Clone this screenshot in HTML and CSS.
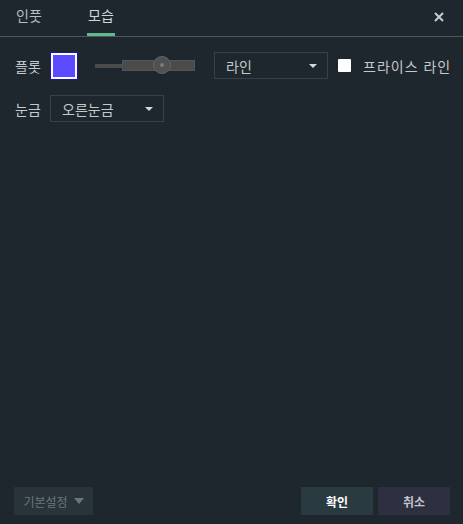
FILE: index.html
```html
<!DOCTYPE html>
<html lang="ko">
<head>
<meta charset="utf-8">
<link rel="stylesheet" href="styles.css">
</head>
<body>
<div class="dialog">
  <div class="tabs">
    <div class="tab">인풋</div>
    <div class="tab active">모습</div>
    <div class="close">
      <svg width="10" height="10" viewBox="0 0 10 10"><path d="M1 1L9 9M9 1L1 9" stroke="#c9ccce" stroke-width="2"/></svg>
    </div>
  </div>
  <div class="content">
    <div class="row row1">
      <span class="label">플롯</span>
      <span class="swatch"></span>
      <div class="slider">
        <span class="track-thin"></span>
        <span class="track-thick"></span>
        <span class="knob"><span class="dot"></span></span>
      </div>
      <div class="select sel-line"><span>라인</span><span class="arrow"></span></div>
      <span class="checkbox"></span>
      <span class="cb-label">프라이스 라인</span>
    </div>
    <div class="row row2">
      <span class="label">눈금</span>
      <div class="select sel-scale"><span>오른눈금</span><span class="arrow"></span></div>
    </div>
  </div>
  <div class="footer">
    <div class="btn defaults">기본설정 <span class="arrow dim"></span></div>
    <div class="spacer"></div>
    <div class="btn ok">확인</div>
    <div class="btn cancel">취소</div>
  </div>
</div>
</body>
</html>
```
FILE: styles.css
```css
html, body {
  margin: 0;
  padding: 0;
  background: #1e272e;
}
body {
  font-family: "Noto Sans CJK KR", "Noto Sans", sans-serif;
  font-size: 14px;
  color: #c6c9cb;
}
.dialog {
  width: 463px;
  height: 524px;
  display: flex;
  flex-direction: column;
}
.tabs {
  height: 36px;
  border-bottom: 1px solid #4f5659;
  display: flex;
  align-items: stretch;
  padding-left: 15px;
  padding-right: 19px;
}
.tab {
  display: flex;
  align-items: center;
  justify-content: center;
  width: 28px;
  padding-bottom: 3px;
  line-height: 16px;
  margin-right: 44px;
  color: #b9bdc0;
  box-sizing: border-box;
  border-bottom: 3px solid transparent;
  height: 36px;
}
.tab.active {
  border-bottom-color: #5fb88f;
  color: #d2d5d7;
}
.close {
  margin-left: auto;
  display: flex;
  align-items: center;
  padding-bottom: 2px;
}
.content {
  flex: 1;
  padding-left: 15px;
  padding-top: 15px;
}
.row {
  display: flex;
  align-items: center;
}
.row1 { height: 27px; }
.row2 { height: 27px; margin-top: 16px; }
.label {
  width: 26px;
  line-height: 16px;
  color: #c6c9cb;
  white-space: nowrap;
}
.swatch {
  margin-left: 10px;
  width: 22px;
  height: 22px;
  background: #5b4bff;
  border: 2px solid #ffffff;
  outline: 1px solid #1e14b4;
  box-sizing: content-box;
}
.slider {
  margin-left: 18px;
  width: 100px;
  height: 20px;
  display: flex;
  align-items: center;
  position: relative;
}
.track-thin {
  width: 27px;
  height: 4px;
  background: #4b4b4b;
}
.track-thick {
  width: 73px;
  height: 11px;
  background: #4b4b4b;
  box-sizing: border-box;
  border: 1px solid #555;
}
.knob {
  position: absolute;
  left: 58px;
  top: 0px;
  width: 18px;
  height: 18px;
  box-sizing: border-box;
  border-radius: 50%;
  background: #515151;
  border: 1px solid #646464;
  display: flex;
  align-items: center;
  justify-content: center;
}
.dot {
  width: 4px;
  height: 4px;
  border-radius: 50%;
  background: #7a7a7a;
}
.select {
  height: 27px;
  box-sizing: border-box;
  border: 1px solid #36424a;
  display: flex;
  align-items: center;
  justify-content: space-between;
  padding: 0 10px 0 11px;
  color: #c6c9cb;
  line-height: 16px;
}
.sel-line {
  margin-left: 19px;
  width: 114px;
}
.sel-scale {
  margin-left: 9px;
  width: 114px;
  padding-left: 11px;
}
.arrow {
  width: 0;
  height: 0;
  border-left: 4px solid transparent;
  border-right: 4px solid transparent;
  border-top: 4px solid #d6d8da;
}
.checkbox {
  margin-left: 10px;
  width: 13px;
  height: 13px;
  background: #ffffff;
  border-radius: 1px;
}
.cb-label {
  margin-left: 12px;
  color: #c6c9cb;
  line-height: 16px;
  letter-spacing: 1px;
}
.footer {
  display: flex;
  align-items: center;
  padding: 0 13px 9px 14px;
  height: 28px;
}
.spacer { flex: 1; }
.btn {
  height: 28px;
  display: flex;
  align-items: center;
  justify-content: center;
  box-sizing: border-box;
  font-size: 12px;
}
.defaults {
  width: 79px;
  background: #28333a;
  color: #6b757b;
  gap: 6px;
}
.arrow.dim {
  border-left-width: 5px;
  border-right-width: 5px;
  border-top: 6px solid #6b757b;
}
.ok {
  width: 72px;
  background: #2a3a41;
  color: #ffffff;
  font-weight: bold;
}
.cancel {
  width: 72px;
  margin-left: 5px;
  background: #2d3040;
  color: #c3c6cc;
  font-weight: bold;
}
```
